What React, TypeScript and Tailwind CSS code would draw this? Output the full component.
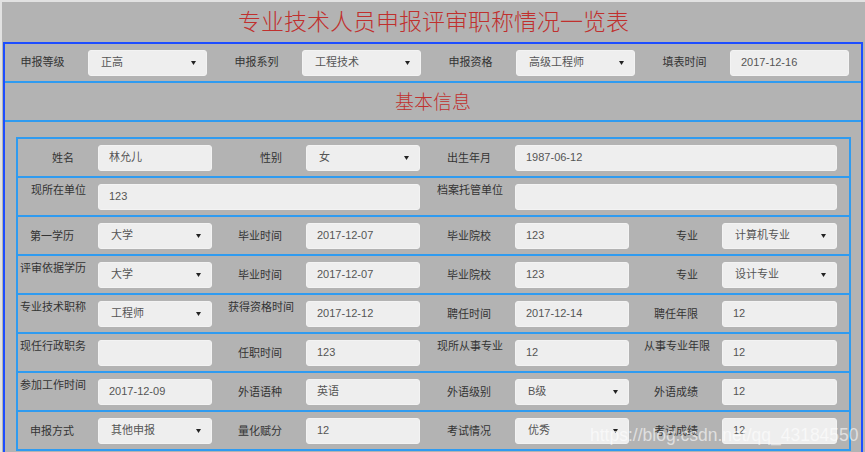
import React from 'react';

interface Cell {
  label: string;
  long?: boolean;
  value: string;
  select?: boolean;
  span?: boolean;
}

const rows: Cell[][] = [
  [
    { label: '姓名', value: '林允儿' },
    { label: '性别', value: '女', select: true },
    { label: '出生年月', value: '1987-06-12', span: true },
  ],
  [
    { label: '现所在单位', long: true, value: '123', span: true },
    { label: '档案托管单位', long: true, value: '', span: true },
  ],
  [
    { label: '第一学历', value: '大学', select: true },
    { label: '毕业时间', value: '2017-12-07' },
    { label: '毕业院校', value: '123' },
    { label: '专业', value: '计算机专业', select: true },
  ],
  [
    { label: '评审依据学历', long: true, value: '大学', select: true },
    { label: '毕业时间', value: '2017-12-07' },
    { label: '毕业院校', value: '123' },
    { label: '专业', value: '设计专业', select: true },
  ],
  [
    { label: '专业技术职称', long: true, value: '工程师', select: true },
    { label: '获得资格时间', long: true, value: '2017-12-12' },
    { label: '聘任时间', value: '2017-12-14' },
    { label: '聘任年限', value: '12' },
  ],
  [
    { label: '现任行政职务', long: true, value: '' },
    { label: '任职时间', value: '123' },
    { label: '现所从事专业', long: true, value: '12' },
    { label: '从事专业年限', long: true, value: '12' },
  ],
  [
    { label: '参加工作时间', long: true, value: '2017-12-09' },
    { label: '外语语种', value: '英语' },
    { label: '外语级别', value: 'B级', select: true },
    { label: '外语成绩', value: '12' },
  ],
  [
    { label: '申报方式', value: '其他申报', select: true },
    { label: '量化赋分', value: '12' },
    { label: '考试情况', value: '优秀', select: true },
    { label: '考试成绩', value: '12' },
  ],
];

const header = [
  { label: '申报等级', value: '正高', select: true },
  { label: '申报系列', value: '工程技术', select: true },
  { label: '申报资格', value: '高级工程师', select: true },
  { label: '填表时间', value: '2017-12-16', select: false },
];

// small select caret
const Arrow = () => (
  <svg width="5" height="4" viewBox="0 0 5 4" className="shrink-0">
    <path d="M0 0 L5 0 L2.5 4 Z" fill="#222" />
  </svg>
);

const Field: React.FC<{ value: string; select?: boolean; className?: string }> = ({ value, select, className }) => (
  <div
    className={`h-[26px] bg-[#eeeeee] rounded-[3px] border border-[#f3f3f3] flex items-center justify-between text-[11px] text-[#555] whitespace-nowrap ${
      select ? 'pl-[12px] pr-[10px]' : 'pl-[10px]'
    } ${className ?? ''}`}
  >
    <span>{value}</span>
    {select && <Arrow />}
  </div>
);

const App: React.FC = () => {
  return (
    <div className="relative w-[865px] h-[452px] overflow-hidden bg-[#b3b3b3] border-t-2 border-l-2 border-[#e2e2e2] font-['Liberation_Sans','Noto_Sans_CJK_SC',sans-serif]">
      <div className="h-[40px] pb-[3px] flex items-center justify-center text-[23px] text-[#c0302e] font-['Noto_Sans_CJK_SC',sans-serif] font-light">
        专业技术人员申报评审职称情况一览表
      </div>

      <div className="ml-[1px] w-[860px] border-2 border-[#1d4dff] h-[420px]">
        <div className="h-[39px] flex items-center gap-[12px] border-b-2 border-[#2f9bf0]">
          {header.map(h => (
            <div key={h.label} className="flex items-center w-[202px] shrink-0">
              <span className="w-[75px] text-center text-[11px] text-[#333]">{h.label}</span>
              <Field value={h.value} select={h.select} className="ml-[8px] w-[119px]" />
            </div>
          ))}
        </div>

        <div className="h-[39px] flex items-center justify-center border-b-2 border-[#2f9bf0] text-[19px] text-[#c0302e] font-['Noto_Sans_CJK_SC',sans-serif] font-light">
          基本信息
        </div>

        <div className="pt-[15px] pl-[11px]">
          <div className="w-[835px] border-x-2 border-t-2 border-[#2f9bf0]">
            {rows.map((row, i) => (
              <div
                key={i}
                className="h-[39px] border-b-2 border-[#2f9bf0] grid grid-cols-[80px_114px_94px_114px_95px_114px_93px_115px] items-center"
              >
                {row.map(c => (
                  <React.Fragment key={c.label}>
                    <div
                      className={`text-right text-[11px] leading-[14px] text-[#333] whitespace-nowrap ${
                        c.long ? 'self-start pt-[5px] pr-[12px]' : 'pr-[24px]'
                      }`}
                    >
                      {c.label}
                    </div>
                    <Field value={c.value} select={c.select} className={c.span ? 'col-span-3' : ''} />
                  </React.Fragment>
                ))}
              </div>
            ))}
          </div>
        </div>
      </div>

      <div className="absolute left-[588px] top-[420px] text-[17.5px] text-white/60 whitespace-nowrap font-['Liberation_Sans',sans-serif]">
        https://blog.csdn.net/qq_43184550
      </div>
    </div>
  );
};

export default App;
